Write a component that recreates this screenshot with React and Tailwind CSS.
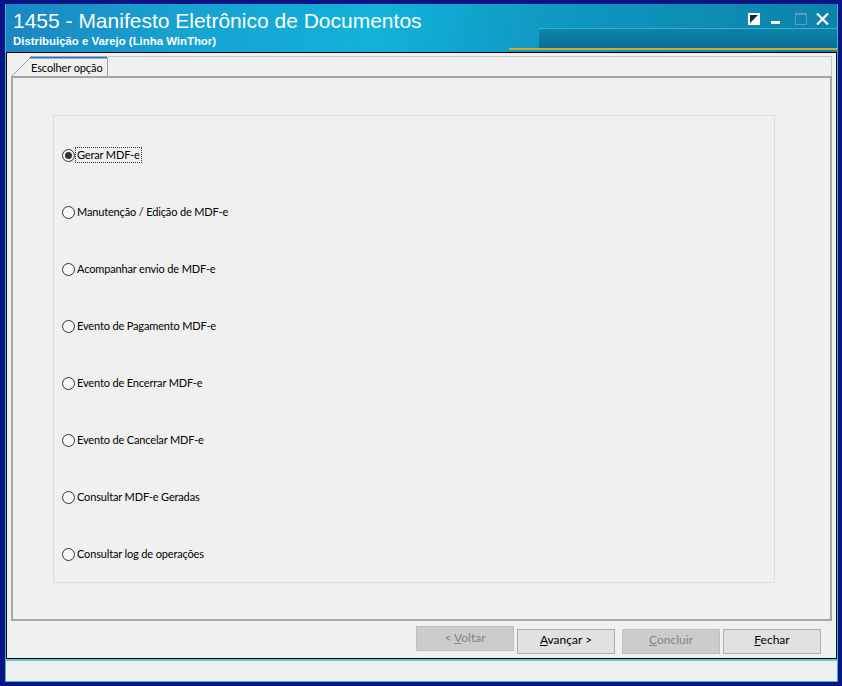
import React from "react";

// Opções do assistente
const OPTIONS = [
  "Gerar MDF-e",
  "Manutenção / Edição de MDF-e",
  "Acompanhar envio de MDF-e",
  "Evento de Pagamento MDF-e",
  "Evento de Encerrar MDF-e",
  "Evento de Cancelar MDF-e",
  "Consultar MDF-e Geradas",
  "Consultar log de operações",
];

const Radio = ({ checked }) => (
  <span className="w-[13px] h-[13px] shrink-0 rounded-full border border-[#333333] bg-[#f7f7f7] flex items-center justify-center">
    {checked && <span className="w-[7px] h-[7px] rounded-full bg-[#333333]" />}
  </span>
);

const WinButton = ({ children, disabled }) => (
  <button
    className={`w-[98px] h-[25px] border text-[12px] leading-none pb-[2px] ${
      disabled
        ? "bg-[#cccccc] border-[#bfbfbf] text-[#838383]"
        : "bg-[#e1e1e1] border-[#adadad] text-black"
    }`}
  >
    {children}
  </button>
);

const WindowIcons = () => (
  <div className="flex items-start pt-[3px] pr-[8px]">
    {/* restaurar */}
    <svg width="12" height="12" viewBox="0 0 12 12">
      <rect x="0" y="0" width="12" height="12" fill="#ffffff" />
      <polygon points="2,2 10,2 2,10" fill="#0b2c3a" />
    </svg>
    {/* minimizar */}
    <svg width="9" height="12" viewBox="0 0 9 12" className="ml-[11px]">
      <rect x="0" y="8" width="9" height="3" fill="#ffffff" />
    </svg>
    {/* maximizar */}
    <svg width="12" height="12" viewBox="0 0 12 12" className="ml-[15px]">
      <rect x="0.5" y="0.5" width="11" height="11" fill="none" stroke="#5f9fb6" />
      <rect x="0" y="0" width="12" height="2" fill="#5f9fb6" />
    </svg>
    {/* fechar */}
    <svg width="13" height="12" viewBox="0 0 13 12" className="ml-[9px]">
      <path d="M1 0.5 L12 11.5 M12 0.5 L1 11.5" stroke="#ffffff" strokeWidth="2.2" />
    </svg>
  </div>
);

export default function App() {
  return (
    <div className="w-[842px] h-[686px] bg-[#0a1585] pt-[4px] pl-[5px] pr-[4px] pb-[4px] font-['Lato',sans-serif]">
      <div className="h-full flex flex-col bg-[#63c6dc] border-l border-r border-b border-[#34b8d8]">
        {/* Cabeçalho */}
        <div className="relative h-[48px] shrink-0 bg-[linear-gradient(100deg,#1b86c2_0%,#17a3d2_22%,#12b2d9_45%,#0f98c2_65%,#0c82aa_100%)] pl-[7px] pt-[6px] overflow-hidden">
          <div className="absolute left-[533px] top-[24px] w-[298px] h-[20px] bg-[linear-gradient(180deg,#0d84ab_0%,#0a6e94_100%)] border-t border-[#3ab0d0]" />
          <div className="absolute left-[503px] top-[44px] w-[330px] h-[2px] bg-[#d6a53c]" />
          <div className="relative flex justify-between">
            <div className="font-['Liberation_Sans',sans-serif] text-white">
              <div className="text-[21px] leading-none">1455 - Manifesto Eletrônico de Documentos</div>
              <div className="mt-[5px] text-[11.4px] leading-none font-bold">Distribuição e Varejo (Linha WinThor)</div>
            </div>
            <WindowIcons />
          </div>
        </div>

        {/* Painel principal */}
        <div className="h-[607px] shrink-0 bg-[#f0f0f0] border border-black flex flex-col px-[4px] pt-[3px]">
          {/* Abas */}
          <div className="flex h-[20px]">
            <div className="relative w-[97px] h-[20px] shrink-0">
              <svg className="absolute inset-0" width="97" height="20" viewBox="0 0 97 20">
                <path d="M1 20 L19 2" stroke="#a0a0a0" strokeWidth="1" fill="none" />
                <path d="M19 1.5 L96 1.5" stroke="#2d72b8" strokeWidth="2" />
                <path d="M96.5 1 L96.5 20" stroke="#a0a0a0" strokeWidth="1" />
              </svg>
              <div className="relative pl-[20px] pt-[6px] text-[11px] tracking-[-0.1px] leading-none whitespace-nowrap text-black">
                Escolher opção
              </div>
            </div>
            <div className="flex-1 border-t border-r border-[#c8c8c8]" />
          </div>
          <div className="h-[545px] border-2 border-[#a6a6a6] pl-[40px] pt-[37px]">
            <div className="w-[722px] h-[468px] border border-[#dcdcdc] pl-[8px] pt-[31px] flex flex-col gap-[41px]">
              {OPTIONS.map((label, i) => (
                <div key={label} className="h-[16px] flex items-center">
                  <Radio checked={i === 0} />
                  <span
                    className={`px-[1px] text-[11px] tracking-[-0.15px] leading-[14px] whitespace-nowrap text-black border border-dotted ${
                      i === 0 ? "border-[#333333]" : "border-transparent"
                    }`}
                  >
                    {label}
                  </span>
                </div>
              ))}
            </div>
          </div>
          {/* Botões */}
          <div className="flex justify-end pr-[11px] pt-[5px]">
            <WinButton disabled>
              &lt; <u>V</u>oltar
            </WinButton>
            <div className="ml-[3px]">
              <WinButton>
                <u>A</u>vançar &gt;
              </WinButton>
            </div>
            <div className="ml-[7px]">
              <WinButton disabled>
                <u>C</u>oncluir
              </WinButton>
            </div>
            <div className="ml-[3px]">
              <WinButton>
                <u>F</u>echar
              </WinButton>
            </div>
          </div>
        </div>

        {/* Barra de status */}
        <div className="mt-[2px] h-[20px] shrink-0 bg-[#f0f0f0]" />
      </div>
    </div>
  );
}
